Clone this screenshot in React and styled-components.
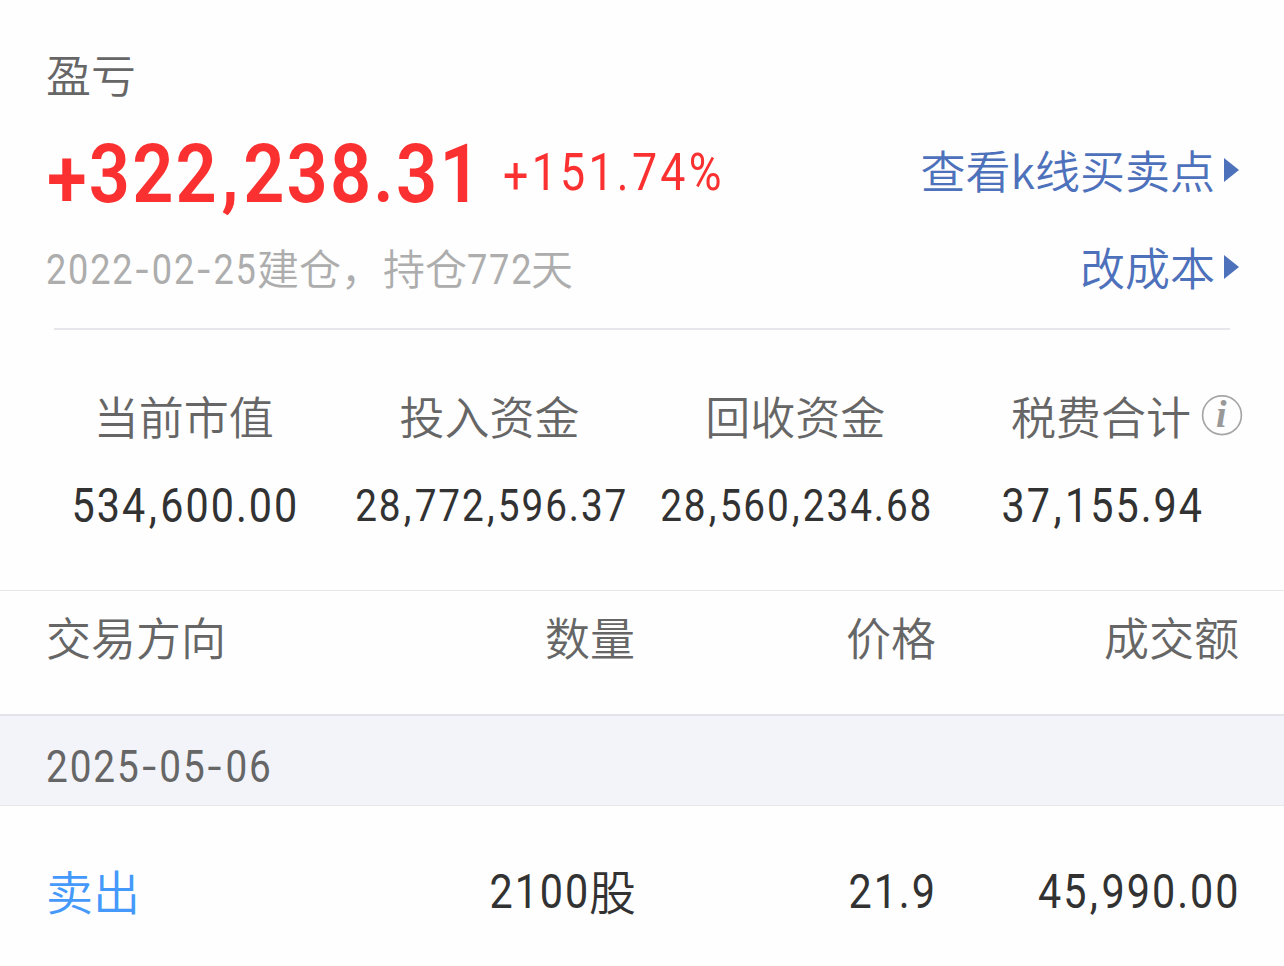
import React from "react";
import styled, { createGlobalStyle } from "styled-components";

const GlobalStyle = createGlobalStyle`
  * {
    box-sizing: border-box;
  }
  body {
    margin: 0;
    background: #fefefe;
    font-family: Roboto, "Noto Sans CJK SC", sans-serif;
    color: #323232;
  }
`;

const Page = styled.div`
  width: 1284px;
  height: 966px;
  overflow: hidden;
  background: #fefefe;
  white-space: nowrap;
`;

const Hanzi = styled.span`
  display: block;
  margin-top: -${props => props.lift ?? 2}px;
  font-family: "Noto Sans CJK SC", sans-serif;
  font-weight: 350;
  font-size: ${props => props.size || 45}px;
`;

const Digits = styled.span`
  display: inline-block;
  margin-right: -0.03em;
  font-family: Roboto, sans-serif;
  font-size: ${props => props.size}px;
  font-weight: ${props => props.weight || 400};
  letter-spacing: ${props => props.spacing || 0.049}em;
  transform: scaleX(${props => props.stretch || 0.86});
  transform-origin: ${props => props.origin || "left"} center;
`;

const Comma = styled.span`
  margin: 0 0.035em;
`;

const Hyphen = styled.span`
  display: inline-block;
  margin: 0 0.08em;
  transform: scaleX(1.3);
`;

const Plus = styled.span`
  line-height: 1;
  vertical-align: -0.06em;
`;

const Summary = styled.header`
  height: 328px;
  padding: 46px 45px 0 46px;
`;

const Title = styled.div`
  display: flex;
  height: 60px;
  line-height: 60px;
  color: #666;
`;

const SummaryRow = styled.div`
  display: flex;
  justify-content: space-between;
  height: ${props => props.height}px;
  line-height: ${props => props.height}px;
`;

const Profit = styled.div`
  display: flex;
  color: #fb3030;
`;

const Slot = styled.div`
  width: ${props => props.width}px;
`;

const Amount = styled(Slot)`
  padding: 1px 0 0 1px;
`;

const Holding = styled.div`
  display: flex;
  color: #adadad;
`;

const Link = styled.a`
  display: flex;
  align-items: center;
  gap: 9px;
  padding-bottom: 6px;
  color: #4e71bb;
`;

const Arrow = styled.i`
  border-style: solid;
  border-width: 12px 0 12px 15px;
  border-color: transparent transparent transparent currentColor;
`;

const Divider = styled.div`
  height: 2px;
  margin: 0 54px;
  background: #e6e6eb;
`;

const Stats = styled.section`
  display: grid;
  grid-template-columns: repeat(4, minmax(0, 1fr));
  height: 260px;
  padding: 57px 30px 0 31px;
`;

const Stat = styled.div`
  display: flex;
  flex-direction: column;
  align-items: center;
`;

const StatLabel = styled.div`
  position: relative;
  display: flex;
  height: 60px;
  line-height: 60px;
  color: #666;
`;

const StatValue = styled.div`
  height: 60px;
  margin-top: 29px;
  padding-left: 2px;
  line-height: 60px;
`;

const InfoIcon = styled.svg`
  position: absolute;
  left: 100%;
  top: 7px;
  margin-left: 10px;
`;

const InfoLetter = styled.text`
  font: italic bold 38px "Liberation Serif", serif;
  fill: #999;
`;

const Columns = styled.div`
  display: grid;
  grid-template-columns: 290px 300px 300px 303px;
  padding: 0 45px 0 46px;
`;

const HeadRow = styled(Columns)`
  grid-template-columns: 288px 301px 301px 303px;
  height: 124px;
  border-top: 1px solid #e6e6eb;
  padding-top: 17px;
  line-height: 60px;
  color: #666;
`;

const DateBar = styled.div`
  height: 92px;
  padding: 6px 46px 0;
  border-top: 2px solid #e3e4e9;
  border-bottom: 1px solid #e6e6eb;
  background: #f3f4f9;
  line-height: 90px;
  color: #666;
`;

const TradeRow = styled(Columns)`
  height: 160px;
  padding-top: 56px;
  line-height: 60px;
`;

const Cell = styled.div`
  display: flex;
  justify-content: ${props => (props.$start ? "flex-start" : "flex-end")};
  color: ${props => (props.$sell ? "#4499fb" : "inherit")};
`;

const marks = { ",": Comma, "-": Hyphen, "+": Plus };

const Figure = ({ value, ...rest }) => (
  <Digits {...rest}>
    {value.split(/([,+-])/).map((part, i) => {
      const Mark = marks[part];
      return Mark ? <Mark key={i}>{part}</Mark> : part;
    })}
  </Digits>
);

const Info = () => (
  <InfoIcon width="42" height="42" viewBox="0 0 42 42" fill="none">
    <circle cx="21" cy="21.2" r="19.4" stroke="#a6a6a6" strokeWidth="1.7" />
    <InfoLetter x="15" y="33">i</InfoLetter>
  </InfoIcon>
);

const stats = [
  { label: "当前市值", value: "534,600.00", size: 48 },
  { label: "投入资金", value: "28,772,596.37", size: 45 },
  { label: "回收资金", value: "28,560,234.68", size: 45 },
  { label: "税费合计", value: "37,155.94", size: 48, info: true }
];

const App = () => (
  <>
    <GlobalStyle />
    <Page>
      <Summary>
        <Title>
          <Hanzi>盈亏</Hanzi>
        </Title>
        <SummaryRow height={134}>
          <Profit>
            <Amount width={457}>
              <Figure size={82} weight={600} stretch={0.88} spacing={0.03} value="+322,238.31" />
            </Amount>
            <Figure size={52} spacing={0.073} value="+151.74%" />
          </Profit>
          <Link>
            <Hanzi lift={0}>查看k线买卖点</Hanzi>
            <Arrow />
          </Link>
        </SummaryRow>
        <SummaryRow height={60}>
          <Holding>
            <Slot width={211}>
              <Figure size={42} value="2022-02-25" />
            </Slot>
            <Hanzi size={42} lift={3}>建仓，持仓</Hanzi>
            <Slot width={64}>
              <Figure size={42} value="772" />
            </Slot>
            <Hanzi size={42} lift={3}>天</Hanzi>
          </Holding>
          <Link>
            <Hanzi lift={0}>改成本</Hanzi>
            <Arrow />
          </Link>
        </SummaryRow>
      </Summary>
      <Divider />
      <Stats>
        {stats.map(({ label, value, size, info }) => (
          <Stat key={label}>
            <StatLabel>
              <Hanzi lift={1}>{label}</Hanzi>
              {info && <Info />}
            </StatLabel>
            <StatValue>
              <Figure size={size} origin="center" value={value} />
            </StatValue>
          </Stat>
        ))}
      </Stats>
      <HeadRow>
        <Cell $start><Hanzi lift={1}>交易方向</Hanzi></Cell>
        <Cell><Hanzi lift={1}>数量</Hanzi></Cell>
        <Cell><Hanzi lift={1}>价格</Hanzi></Cell>
        <Cell><Hanzi lift={1}>成交额</Hanzi></Cell>
      </HeadRow>
      <DateBar>
        <Figure size={45} value="2025-05-06" />
      </DateBar>
      <TradeRow>
        <Cell $start $sell><Hanzi size={47}>卖出</Hanzi></Cell>
        <Cell>
          <Figure size={48} origin="right" value="2100" />
          <Hanzi size={47}>股</Hanzi>
        </Cell>
        <Cell><Figure size={48} origin="right" value="21.9" /></Cell>
        <Cell><Figure size={48} origin="right" value="45,990.00" /></Cell>
      </TradeRow>
    </Page>
  </>
);

export default App;
